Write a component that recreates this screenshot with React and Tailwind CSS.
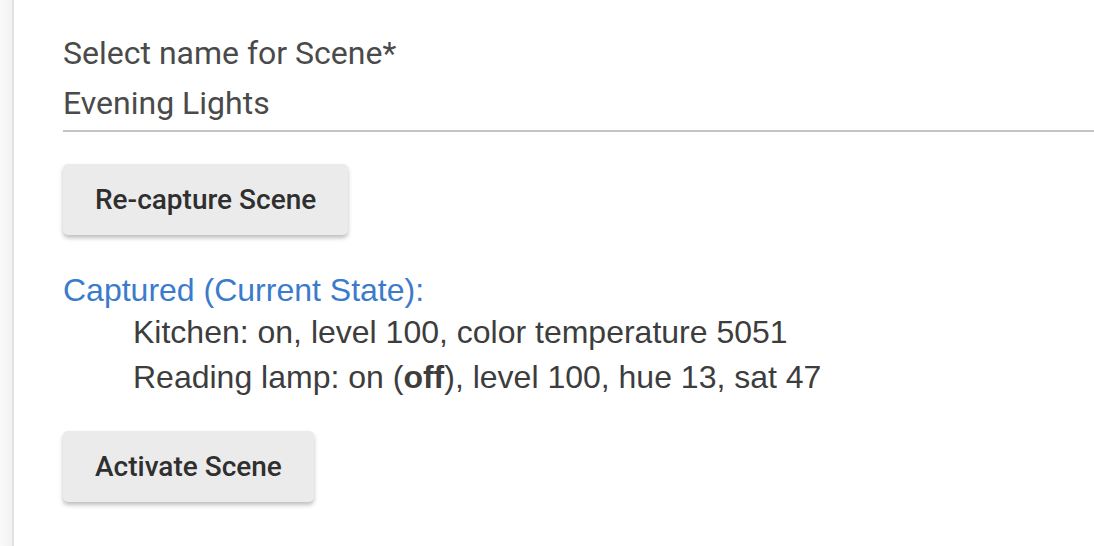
import React from 'react';

const roboto = { fontFamily: 'Roboto, "Liberation Sans", sans-serif' };

const SceneButton = ({ children }) => (
    <button
        className="h-[71px] px-[32px] rounded-[5px] bg-[#ebebeb] text-[#2f2f2f] text-[28px] font-medium shadow-[0_3px_4px_rgba(0,0,0,0.25)] font-['Roboto',sans-serif]"
    >
        {children}
    </button>
);

export default function App() {
    return (
        <div className="flex w-[1094px] h-[546px] bg-white overflow-hidden">
            {/* card edge shadow */}
            <div className="w-[12px] shrink-0 bg-gradient-to-r from-[#fafafa] to-[#f2f2f2]" />
            <div className="flex-1 border-l-2 border-[#e2e2e2] pl-[49px] pt-[33px] font-['Liberation_Sans',sans-serif]">
                {/* name field */}
                <div className="border-b-2 border-[#c4c4c4] pb-[7px] text-[#4a4a4a]" style={roboto}>
                    <p className="text-[32px] leading-[40px]">Select name for Scene*</p>
                    <p className="text-[32px] leading-[40px] mt-[10px]">Evening Lights</p>
                </div>

                <div className="mt-[32px]">
                    <SceneButton>Re-capture Scene</SceneButton>
                </div>

                <p className="mt-[35px] text-[32px] leading-[40px] text-[#3b7bcc]">Captured (Current State):</p>
                <div className="pl-[70px] text-[32px] leading-[45px] text-[#3d3d3d]">
                    <p>Kitchen: on, level 100, color temperature 5051</p>
                    <p>Reading lamp: on (<b>off</b>), level 100, hue 13, sat 47</p>
                </div>

                <div className="mt-[31px]">
                    <SceneButton>Activate Scene</SceneButton>
                </div>
            </div>
        </div>
    );
}
